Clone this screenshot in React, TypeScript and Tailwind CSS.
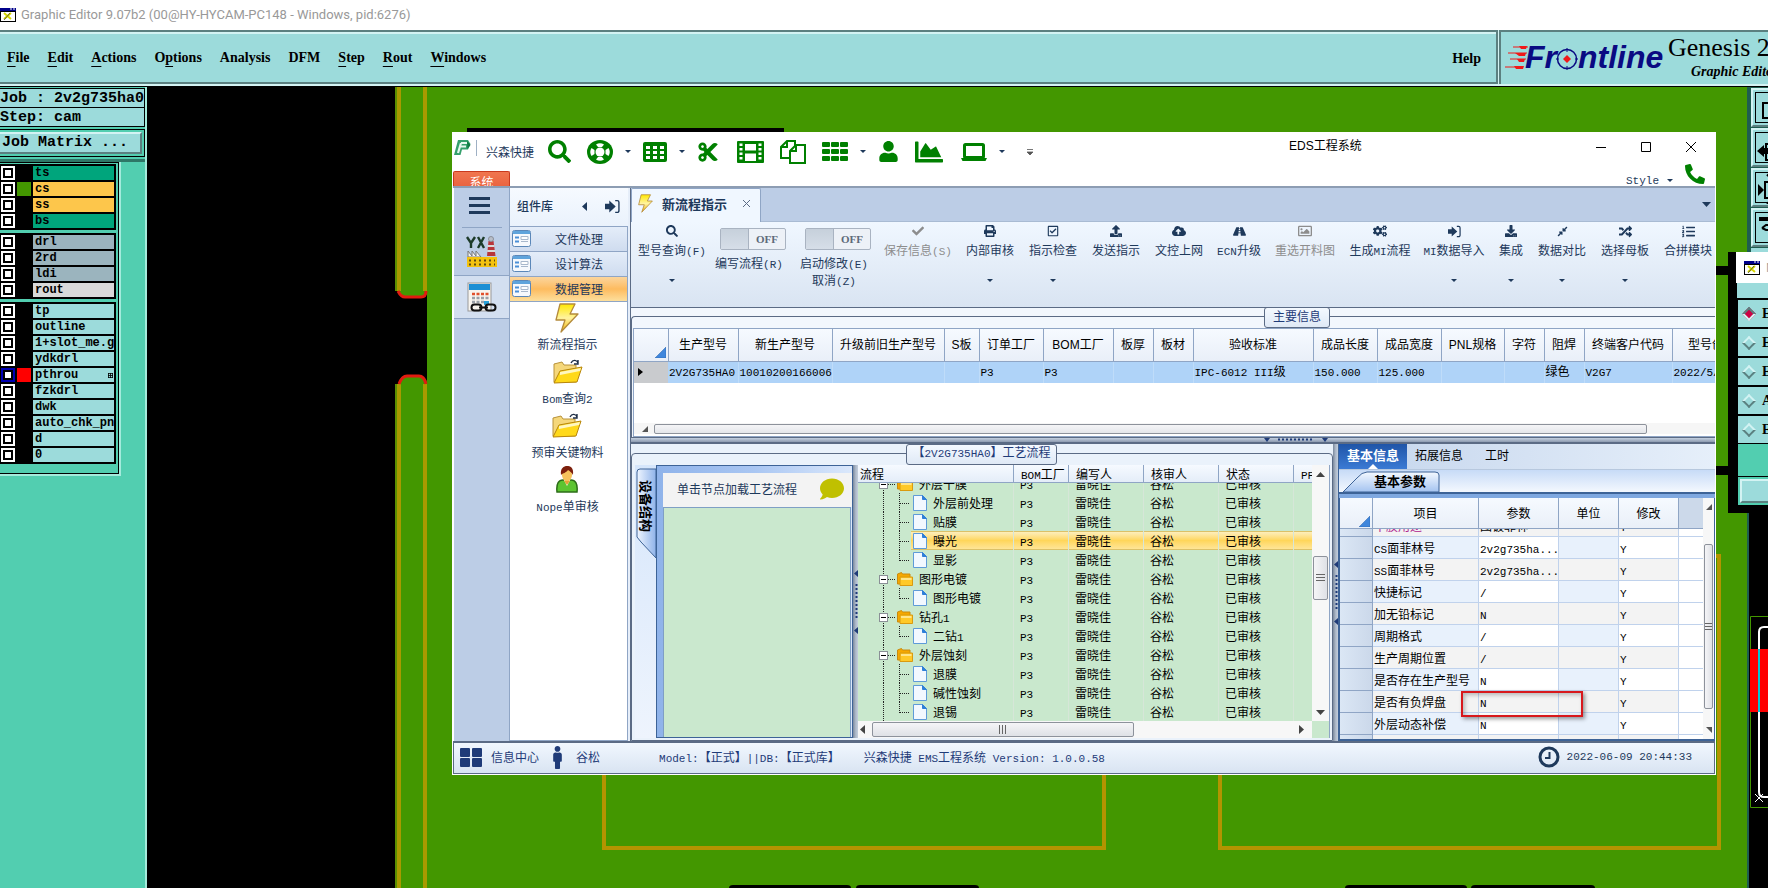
import React from 'react';
import {
  FaSearch, FaCheck, FaPrint, FaRegCheckSquare, FaUpload, FaCloudUploadAlt, FaRoad, FaRegImage, FaCogs,
  FaDownload, FaCompressAlt, FaRandom, FaListOl, FaUser, FaPhone, FaComment, FaCut, FaChartArea, FaMale
} from 'react-icons/fa';

interface Layer {
  name: string;
  bg: string;
  swatch?: string;
  active?: boolean;
}

interface RibbonItem {
  label: string;
  width: string;
  icon: React.ReactNode;
  menu?: boolean;
  disabled?: boolean;
}

interface FlowNode {
  name: string;
  folder?: boolean;
  last?: boolean;
  selected?: boolean;
}

const MENU = [
  ['', 'F', 'ile'], ['', 'E', 'dit'], ['', 'A', 'ctions'], ['O', 'p', 'tions'], ['Analysis', '', ''],
  ['DFM', '', ''], ['', 'S', 'tep'], ['', 'R', 'out'], ['', 'W', 'indows']
];

const AQUA = 'bg-[#9cdbdb]';

const LAYER_GROUPS: Layer[][] = [
  [
    { name: 'ts', bg: 'bg-[#00a57c]' },
    { name: 'cs', bg: 'bg-[#fdc64b]', swatch: 'bg-[#439700]' },
    { name: 'ss', bg: 'bg-[#fdc64b]' },
    { name: 'bs', bg: 'bg-[#00a57c]' }
  ],
  [
    { name: 'drl', bg: 'bg-[#9bb4be]' },
    { name: '2rd', bg: 'bg-[#9bb4be]' },
    { name: 'ldi', bg: 'bg-[#9bb4be]' },
    { name: 'rout', bg: 'bg-[#d9d9d9]' }
  ],
  [
    { name: 'tp', bg: AQUA },
    { name: 'outline', bg: AQUA },
    { name: '1+slot_me.gbr', bg: AQUA },
    { name: 'ydkdrl', bg: AQUA },
    { name: 'pthrou', bg: AQUA, swatch: 'bg-[#ff0000]', active: true },
    { name: 'fzkdrl', bg: AQUA },
    { name: 'dwk', bg: AQUA },
    { name: 'auto_chk_pnl', bg: AQUA },
    { name: 'd', bg: AQUA },
    { name: '0', bg: AQUA }
  ]
];

const SignIn = ({ size = 13 }: { size?: number }) => (
  <svg width={size} height={size} viewBox="0 0 14 14" fill="currentColor">
    <path d="M0 4.500h4V1.500L10 7l-6 5.500v-3H0z" />
    <path d="M9.500 1.500h2a1.500 1.500 0 0 1 1.500 1.500v8a1.500 1.500 0 0 1-1.500 1.500h-2" fill="none" stroke="currentColor" strokeWidth="1.300" />
  </svg>
);

const RIBBON: RibbonItem[] = [
  { label: '保存信息(S)', width: 'w-[72px]', icon: <FaCheck size={12} />, disabled: true },
  { label: '内部审核', width: 'w-[72px]', icon: <FaPrint size={12} />, menu: true },
  { label: '指示检查', width: 'w-[54px]', icon: <FaRegCheckSquare size={12} />, menu: true },
  { label: '发送指示', width: 'w-[72px]', icon: <FaUpload size={12} /> },
  { label: '文控上网', width: 'w-[54px]', icon: <FaCloudUploadAlt size={14} /> },
  { label: 'ECN升级', width: 'w-[66px]', icon: <FaRoad size={13} /> },
  { label: '重选开料图', width: 'w-[66px]', icon: <FaRegImage size={14} />, disabled: true },
  { label: '生成MI流程', width: 'w-[84px]', icon: <FaCogs size={14} /> },
  { label: 'MI数据导入', width: 'w-[64px]', icon: <SignIn />, menu: true },
  { label: '集成', width: 'w-[50px]', icon: <FaDownload size={12} />, menu: true },
  { label: '数据对比', width: 'w-[52px]', icon: <FaCompressAlt size={11} />, menu: true },
  { label: '选择母板', width: 'w-[74px]', icon: <FaRandom size={13} />, menu: true },
  { label: '合拼模块', width: 'w-[52px]', icon: <FaListOl size={13} /> }
];

const MAIN_COLS: [string, string, string][] = [
  ['生产型号', 'w-[70px]', '2V2G735HA0'],
  ['新生产型号', 'w-[94px]', '10010200166006'],
  ['升级前旧生产型号', 'w-[112px]', ''],
  ['S板', 'w-[35px]', ''],
  ['订单工厂', 'w-[64px]', 'P3'],
  ['BOM工厂', 'w-[70px]', 'P3'],
  ['板厚', 'w-[40px]', ''],
  ['板材', 'w-[40px]', ''],
  ['验收标准', 'w-[120px]', 'IPC-6012 III级'],
  ['成品长度', 'w-[64px]', '150.000'],
  ['成品宽度', 'w-[64px]', '125.000'],
  ['PNL规格', 'w-[63px]', ''],
  ['字符', 'w-[40px]', ''],
  ['阻焊', 'w-[40px]', '绿色'],
  ['终端客户代码', 'w-[88px]', 'V2G7'],
  ['型号创建日期', 'w-[104px]', '2022/5/']
];

const FLOW: FlowNode[] = [
  { name: '外层干膜', folder: true },
  { name: '外层前处理' },
  { name: '贴膜' },
  { name: '曝光', selected: true },
  { name: '显影', last: true },
  { name: '图形电镀', folder: true },
  { name: '图形电镀', last: true },
  { name: '钻孔1', folder: true },
  { name: '二钻1', last: true },
  { name: '外层蚀刻', folder: true },
  { name: '退膜' },
  { name: '碱性蚀刻' },
  { name: '退锡', last: true }
];

const PARAMS: [string, string][] = [
  ['干膜用途', '图镀菲林'],
  ['CS面菲林号', '2v2g735ha...'],
  ['SS面菲林号', '2v2g735ha...'],
  ['快捷标记', '/'],
  ['加无铅标记', 'N'],
  ['周期格式', '/'],
  ['生产周期位置', '/'],
  ['是否存在生产型号', 'N'],
  ['是否有负焊盘', 'N'],
  ['外层动态补偿', 'N'],
  ['', '']
];

// Latin runs are set in a narrower monospace next to the Chinese glyphs
const Mix = ({ children }: { children: string }) => (
  <>
    {children.split(/([\x20-\x7e]+)/).map((part, i) =>
      i % 2 ? <span key={i} className="font-['Liberation_Mono',monospace] text-[11px] leading-none whitespace-pre">{part}</span> : part
    )}
  </>
);

const Caret = ({ className = '' }: { className?: string }) => (
  <svg width="6" height="3" viewBox="0 0 6 3" className={`shrink-0 ${className}`}><path d="M0 0h6L3 3z" fill="currentColor" /></svg>
);

const XWindowIcon = () => (
  <svg width="16" height="14" viewBox="0 0 16 14" className="shrink-0">
    <rect width="16" height="14" fill="#000" />
    <rect x="1" y="4" width="14" height="9" fill="#fff" />
    <rect x="0" y="0" width="16" height="3" fill="#00008b" />
    <path d="M10 1h2M13 1h2" stroke="#fff" />
    <path d="M4 5l7 6M11 5l-7 6" stroke="#d8d800" strokeWidth="2" />
    <path d="M10 5l-6 7" stroke="#333" strokeWidth=".7" />
  </svg>
);

const Lightning = ({ w, h }: { w: number; h: number }) => (
  <svg width={w} height={h} viewBox="0 0 24 30">
    <defs>
      <linearGradient id="bolt" x1="0" y1="0" x2="0" y2="1">
        <stop offset="0" stopColor="#ffe800" />
        <stop offset=".5" stopColor="#fff3a0" />
        <stop offset="1" stopColor="#f0b000" />
      </linearGradient>
    </defs>
    <path d="M5 1h15l-5 10h8L6 29l4-12H1z" fill="url(#bolt)" stroke="#b48a3c" strokeWidth="1.3" strokeLinejoin="round" />
  </svg>
);

const OpenFolder = () => (
  <svg width="30" height="26" viewBox="0 0 30 26">
    <path d="M1 23V5l8-2 2 3h12v17z" fill="#f5d77a" stroke="#b8923a" />
    <path d="M1 24l6-12 22-4-5 15z" fill="#ffd91a" stroke="#b8860b" />
    <path d="M7 13l21-4-1 3-20 4z" fill="#fff7c0" />
    <path d="M18 4c2-4 6-3 7 0M25 1v4h-4" fill="none" stroke="#1c2c44" strokeWidth="1.4" />
  </svg>
);

const Person = () => (
  <svg width="22" height="28" viewBox="0 0 22 28">
    <path d="M1 26c-1-9 2-12 6-12h8c4 0 7 3 6 12z" fill="#5cc431" stroke="#2c6d18" strokeWidth="1.5" />
    <path d="M8 14l3 6 3-6z" fill="#fff" />
    <ellipse cx="11" cy="9" rx="5" ry="6.5" fill="#f6c25c" />
    <path d="M5 9C4 2 8 0 11 0s7 1 6 9c-1-2-3-4-5-5-2 3-5 3-7 5z" fill="#7c1f0c" />
    <path d="M8 15l3 4 3-4" fill="#e6a037" />
  </svg>
);

const FormIcon = () => (
  <svg width="19" height="17" viewBox="0 0 19 17">
    <rect x=".5" y=".5" width="18" height="16" rx="2" fill="#f6f9fd" stroke="#5b87b8" />
    <rect x="1" y="1" width="17" height="3" fill="#5fa4dc" />
    <path d="M3 7.5h4M3 11.5h4" stroke="#4a90d8" strokeWidth="2" />
    <path d="M9 6.5h7v3H9zM9 11.5h7" stroke="#a8b8cc" fill="#fff" />
  </svg>
);

const FactoryIcon = () => (
  <svg width="32" height="32" viewBox="0 0 32 32">
    <path d="M1 1l4 6v5M9 1L5 7M12 1l6 11M18 1l-6 11" stroke="#1d3b2a" strokeWidth="2.4" fill="none" />
    <path d="M21 20l1.500-15h5l2 15z" fill="#b8353a" />
    <path d="M21.500 10h7M21.200 15h8" stroke="#d9d9d9" strokeWidth="2" />
    <circle cx="25" cy="3" r="2.500" fill="#b9bec8" stroke="#8a8f9a" />
    <path d="M2 21v-6l4 5v-5l4 5v-5l5 6z" fill="#f4f4f4" stroke="#777" />
    <rect x="1" y="21" width="30" height="10" fill="#f4c20d" />
    <path d="M3 24.500h26M3 28.500h26" stroke="#5c4a10" strokeWidth="2" strokeDasharray="2 3" />
  </svg>
);

const CalendarIcon = () => (
  <svg width="30" height="31" viewBox="0 0 30 31">
    <rect x="1" y="1" width="23" height="28" fill="#f7f4ee" stroke="#999" />
    <rect x="2" y="2" width="21" height="6" fill="#1c8fd4" />
    <path d="M5 12h17" stroke="#e0502c" strokeWidth="2.5" strokeDasharray="3 1.500" />
    <path d="M5 16h17M5 20h13" stroke="#9aa0a8" strokeWidth="2.5" strokeDasharray="3 1.500" />
    <rect x="17" y="19" width="5" height="4" fill="#28a0d8" />
    <rect x="4.500" y="22.500" width="10" height="6" rx="3" fill="none" stroke="#111" strokeWidth="2" />
    <rect x="18.500" y="22.500" width="10" height="6" rx="3" fill="none" stroke="#111" strokeWidth="2" />
    <path d="M12 25.500h9" stroke="#111" strokeWidth="2" />
  </svg>
);

const LifeRing = () => (
  <svg width="26" height="24" viewBox="0 0 26 24">
    <ellipse cx="13" cy="12" rx="13" ry="12" fill="#008000" />
    <path d="M9 4.500q4-2.500 8 0l-2 2.500h-4zM9 19.500q4 2.500 8 0l-2-2.500h-4zM4.500 8q-2.500 4 0 8l3-2v-4zM21.500 8q2.500 4 0 8l-3-2v-4z" fill="#fff" />
    <circle cx="13" cy="12" r="4.500" fill="#fff" />
  </svg>
);

const TableIcon = () => (
  <svg width="24" height="20" viewBox="0 0 24 20">
    <rect width="24" height="20" rx="2" fill="#008000" />
    <path d="M3 4h4v3H3zM10 4h4v3h-4zM17 4h4v3h-4zM3 9h4v3H3zM10 9h4v3h-4zM17 9h4v3h-4zM3 14h4v3H3zM10 14h4v3h-4zM17 14h4v3h-4z" fill="#fff" />
  </svg>
);

const FilmIcon = () => (
  <svg width="27" height="22" viewBox="0 0 27 22">
    <rect width="27" height="22" rx="1" fill="#008000" />
    <path d="M8 3h11v6.500H8zM8 12.500h11V20H8z" fill="#fff" />
    <path d="M4 2.500v18M23 2.500v18" stroke="#fff" strokeWidth="3" strokeDasharray="2.500 2" />
  </svg>
);

const FilesIcon = () => (
  <svg width="26" height="24" viewBox="0 0 26 24" fill="#fff" stroke="#008000" strokeWidth="2">
    <path d="M7 1h8v6l-5 5v6H1V7z" />
    <path d="M7 1v6H1" fill="none" />
    <path d="M16 5h9v18H10V11z" />
    <path d="M16 5v6h-6" fill="none" />
  </svg>
);

const BarsGrid = () => (
  <svg width="26" height="20" viewBox="0 0 26 20" fill="#008000">
    {[0, 7, 14].map(y => [0, 9, 18].map(x => <rect key={`${x}-${y}`} x={x} y={y} width="8" height="5" rx="1" />))}
  </svg>
);

const LaptopIcon = () => (
  <svg width="26" height="18" viewBox="0 0 26 18">
    <rect x="3.500" y="1.500" width="19" height="13" rx="1" fill="#fff" stroke="#008000" strokeWidth="3" />
    <path d="M0 15h26l-1.500 3h-23z" fill="#008000" />
  </svg>
);

const Logo = () => (
  <svg width="17" height="16" viewBox="0 0 17 16">
    <path d="M4 0h10l2.500 4L14 9.500H8L6.500 15H0z" fill="#35a06c" />
    <path d="M7 3h6M6 6.500h6M7 3L4 13" stroke="#e6f8ee" strokeWidth="2.200" fill="none" />
    <path d="M13 1l3.500 4-3 4z" fill="#117a43" />
  </svg>
);

// ---------- Graphic Editor ----------

const MenuBar = () => (
  <div className="flex h-[57px] shrink-0 border-b border-black bg-[#d3f3f3]">
    <nav className="mr-px mb-[2px] flex min-w-0 flex-1 items-center gap-[18px] border-y-2 border-r-2 border-t-[#5b8080] border-r-[#5b8080] border-b-[#5b8080] bg-[#9cdbdb] pt-[2px] pl-[7px] font-['Liberation_Serif',serif] text-[14px] font-bold shadow-[inset_0_2px_0_#d3f3f3]">
      {MENU.map(([a, b, c]) => (
        <button key={a + b + c} className="leading-5">{a}<span className="underline underline-offset-4">{b}</span>{c}</button>
      ))}
      <button className="mr-[15px] ml-auto">Help</button>
    </nav>
    <div className="mb-[2px] flex w-[269px] shrink-0 overflow-hidden border-t-2 border-l-2 border-[#5b8080] bg-[#9cdbdb] pl-1">
      <svg width="160" height="50" viewBox="0 0 160 50" className="shrink-0">
        <path d="M8 15h15M3 21h19M5 27h16M0 35h18" stroke="#f01818" />
        <path d="M14 14h8l-1 3h-5zM10 21h11l-1 3h-6zM12 27h8l-1 3h-5zM9 34h10l-1 3h-7z" fill="#f01818" />
        <g fill="#0a0a82" fontFamily="Liberation Sans" fontWeight="bold" fontStyle="italic" fontSize="32">
          <text x="20" y="36">Fr</text>
          <text x="73" y="36">ntline</text>
        </g>
        <circle cx="62" cy="27" r="9.500" fill="none" stroke="#0a0a82" strokeWidth="1.500" />
        <path d="M62 16v4M62 34v4M51 27h3M70 27h3" stroke="#0a0a82" />
        <path d="M62 23l4 4-4 4-4-4z" fill="#f01818" />
      </svg>
      <div className="flex flex-col font-['Liberation_Serif',serif] whitespace-nowrap">
        <span className="pl-[3px] text-[26px] leading-8">Genesis 2000</span>
        <span className="pl-[26px] text-[14px] leading-4 font-bold italic">Graphic Editor</span>
      </div>
    </div>
  </div>
);

const LayerRow = ({ layer }: { layer: Layer }) => (
  <label className="flex h-4 items-center gap-[2px] bg-black">
    <input
      type="checkbox"
      aria-label={layer.name}
      className={`ml-px h-[14px] w-[14px] shrink-0 appearance-none border-2 bg-white shadow-[inset_0_0_0_2px_#000] ${layer.active ? 'border-[#0000b4]' : 'border-white'}`}
    />
    <span className={`h-[14px] w-[14px] shrink-0 ${layer.swatch ?? 'bg-black'}`} />
    <span className={`flex h-[14px] w-[81px] items-center overflow-hidden pl-[2px] text-[12px] leading-[14px] ${layer.bg}`}>
      {layer.name}
      {layer.active && (
        <svg width="5" height="5" viewBox="0 0 5 5" className="mr-px ml-auto"><path d="M0 .5h5M0 2.500h5M0 4.500h5M.5 0v5M2.500 0v5M4.500 0v5" stroke="#000" strokeWidth=".8" /></svg>
      )}
    </span>
  </label>
);

const LayerSidebar = () => (
  <aside className="w-[147px] shrink-0 border-r-2 border-[#a4ebdc] bg-[#52ceb0] pt-px font-['Liberation_Mono',monospace] font-bold">
    <div className="border border-l-0 border-black bg-black text-[15px] leading-5">
      <div className="mb-px h-[18px] overflow-hidden bg-[#9cdbdb] whitespace-pre">Job : 2v2g735ha0</div>
      <div className="h-[18px] overflow-hidden bg-[#9cdbdb] whitespace-pre">Step: cam</div>
    </div>
    <div className="mt-[2px] border border-l-0 border-black py-[2px] pr-[2px]">
      <button className="block h-[22px] w-full border-2 border-l-0 border-t-[#d3f3f3] border-r-[#5b8080] border-b-[#5b8080] bg-[#9cdbdb] pl-[2px] text-left text-[15px] leading-[18px]">Job Matrix ...</button>
    </div>
    <div className="mt-[2px] h-[3px] bg-[#2e7767]" />
    <div className="w-[121px] border-r-2 border-b-2 border-[#a4ebdc]">
      <div className="flex flex-col gap-[3px] border-t border-r border-b border-black pt-px pr-[2px] pb-[9px]">
        {LAYER_GROUPS.map((group, i) => (
          <div key={i} className="border-y border-r border-black">
            {group.map(layer => <LayerRow key={layer.name} layer={layer} />)}
          </div>
        ))}
      </div>
    </div>
  </aside>
);

const Board = () => (
  <svg className="absolute top-0 left-0" width="1621" height="801" viewBox="147 87 1621 801">
    <rect x="395" y="87" width="1353" height="801" fill="#439700" />
    <path d="M396 87V291M396 384V888" stroke="#5a8f00" strokeWidth="2" />
    <path d="M399 87V291M425 87V291M399 384V888M425 384V888" stroke="#a89a00" strokeWidth="4" />
    <path d="M395 291h4q0 7 8 7h12q8 0 8-7V384q0-9-12-9h-6q-10 0-10 9h-4z" fill="#000" />
    <path d="M398 291q3 6 7 6h16q5 0 5-6M399 384q3-8 8-8h12q5 0 7 8" fill="none" stroke="#e21b10" strokeWidth="3" />
    <rect x="467" y="128" width="317" height="10" fill="#000" />
    <path d="M604 770V848H1104V770M1220 770V848H1719V556h-6" fill="none" stroke="#b39400" strokeWidth="4" />
    <path d="M729 888q0-3 4-3h114q4 0 4 3zM856 888q0-3 4-3h115q4 0 4 3zM1345 888q0-3 4-3h114q4 0 4 3zM1471 888q0-3 4-3h116q4 0 4 3z" fill="#000" />
    <path d="M1700 266h40v9h-40zM1700 466h40v9h-40z" fill="#000" />
    <rect x="1748" y="370" width="20" height="518" fill="#000" />
    <path d="M1748 87V888" stroke="#1f5d50" strokeWidth="2" />
    <path d="M1768 616.500h-17.500v191H1768" fill="none" stroke="#439700" />
    <rect x="1750" y="649" width="18" height="63" fill="#ff0000" />
    <path d="M1768 627h-4q-5 0-5 5V792q0 5 5 5h4" fill="none" stroke="#fff" strokeWidth="2" />
    <path d="M1759 649V712" stroke="#00c8d8" strokeWidth="2" />
    <path d="M1755 794l8 8M1763 794l-8 8" stroke="#fff" />
  </svg>
);

const TOOL_DRAWINGS = [
  'M20 5v6M15 9h10M9 12h14v15H9z',
  'M12 13h14v5h5v6h-5v5H12z',
  'M11 11h14v16H11zM13 5l3-3M13 33l3-3',
  'M7 8h18M8 17l4-3h12M8 17l4 2h12M17 24a5 5 0 1 0 8-1'
];

const TOOL_FILLS = [
  'M18 7l4-3v6z',
  'M3 20l7-6v3h5v6h-5v3z',
  'M4 13l6 6-6 6z',
  'M5 6h20v4H5z'
];

const ToolStrip = () => (
  <div className="relative w-5 shrink-0 self-start overflow-hidden bg-[#1f5d50] pt-px pl-[3px]">
    {TOOL_DRAWINGS.map((d, i) => (
      <button key={i} aria-label={`tool ${i + 1}`} className="mb-px block h-[39px] w-[39px] border-2 border-t-[#d3f3f3] border-r-[#5b8080] border-b-[#5b8080] border-l-[#d3f3f3] bg-[#9cdbdb] p-px">
        <svg width="33" height="33" viewBox="0 0 33 33" fill="none" stroke="#000" strokeWidth="2">
          <rect x="1.500" y="1.500" width="30" height="30" strokeWidth="1" />
          <path d={d} />
          <path d={TOOL_FILLS[i]} fill="#000" stroke="none" />
        </svg>
      </button>
    ))}
    <div className="h-2 bg-[#9cdbdb]" />
  </div>
);

const OptionsPopup = () => (
  <div className="absolute top-[252px] right-0 h-[261px] w-10 overflow-hidden border-l-8 border-black bg-black">
    <div className="flex h-[31px] items-center bg-white pl-2">
      <XWindowIcon />
      <span className="ml-[6px] text-[12px] text-[#999]">N</span>
    </div>
    <div className="ml-px h-[15px] bg-[#9cdbdb]" />
    {['E', 'E', 'E', 'A', 'E'].map((t, i) => (
      <label key={i} className="mt-[2px] ml-[2px] flex h-[27px] items-center gap-2 bg-[#9cdbdb] pl-[6px] font-['Liberation_Serif',serif] text-[14px] font-bold">
        <input
          type="radio"
          name="popup-option"
          defaultChecked={i === 0}
          className="h-[10px] w-[10px] shrink-0 rotate-45 appearance-none border-2 border-t-[#d3f3f3] border-r-[#5b8080] border-b-[#5b8080] border-l-[#d3f3f3] checked:border-t-[#5b8080] checked:border-r-[#d3f3f3] checked:border-b-[#d3f3f3] checked:border-l-[#5b8080] checked:bg-[#cc0044]"
        />
        {t}
      </label>
    ))}
    <div className="mt-px ml-[2px] h-8 bg-[#52ceb0]" />
    <div className="mt-px ml-[2px] bg-[#52ceb0] p-[2px]">
      <button aria-label="apply" className="block h-6 w-16 border-2 border-t-[#d3f3f3] border-r-[#5b8080] border-b-[#5b8080] border-l-[#d3f3f3] bg-[#9cdbdb]" />
    </div>
  </div>
);

// ---------- EDS window ----------

const EdsHeader = () => (
  <header className="flex h-[55px] shrink-0 border-b-2 border-[#8d9db3] bg-white">
    <div className="flex w-[836px] shrink-0 flex-col">
      <div className="flex h-[37px] shrink-0 items-center text-[#008000]">
        <span className="-mt-2 ml-px"><Logo /></span>
        <span className="-mt-2 ml-[5px] h-4 border-l border-[#9fb0c4]" />
        <span className="mr-[14px] ml-[9px] text-[12px] text-[#1e395b]">兴森快捷</span>
        <div className="flex items-center gap-4">
          <button aria-label="search"><FaSearch size={23} /></button>
          <button aria-label="help"><LifeRing /></button>
          <Caret className="-mx-1 text-[#1e395b]" />
          <button aria-label="table"><TableIcon /></button>
          <Caret className="-mx-1 text-[#1e395b]" />
          <button aria-label="cut"><FaCut size={22} /></button>
          <button aria-label="film" className="pl-[2px]"><FilmIcon /></button>
          <button aria-label="copy"><FilesIcon /></button>
          <button aria-label="grid"><BarsGrid /></button>
          <Caret className="-mx-1 text-[#1e395b]" />
          <button aria-label="user"><FaUser size={21} /></button>
          <button aria-label="chart"><FaChartArea size={28} /></button>
          <button aria-label="laptop" className="pl-[2px]"><LaptopIcon /></button>
          <Caret className="-mx-1 text-[#1e395b]" />
          <svg width="6" height="6" viewBox="0 0 6 6" className="ml-[10px]"><path d="M0 .5h6M0 3h6L3 6z" fill="#555" stroke="#555" strokeWidth=".8" /></svg>
        </div>
      </div>
      <button className="mt-px h-[15px] w-[57px] overflow-hidden rounded-t-[2px] border border-b-0 border-[#c93a1e] bg-gradient-to-b from-[#f0764f] to-[#ea6440] pt-px text-[12px] leading-[18px] text-white">系统</button>
    </div>
    <h1 className="pt-[5px] font-['Liberation_Sans','Noto_Sans_CJK_SC',sans-serif] text-[12px] leading-4 whitespace-nowrap">EDS工程系统</h1>
    <div className="ml-auto flex flex-col items-end">
      <div className="mr-[2px] flex h-[28px]">
        <button aria-label="minimize" className="flex w-[45px] items-center justify-center"><svg width="10" height="10" stroke="#000"><path d="M0 5.500h10" /></svg></button>
        <button aria-label="maximize" className="flex w-[45px] items-center justify-center"><svg width="10" height="10" fill="none" stroke="#000"><path d="M.5.5h9v9h-9z" /></svg></button>
        <button aria-label="close" className="flex w-[45px] items-center justify-center"><svg width="10" height="10" stroke="#000"><path d="M0 0l10 10M10 0L0 10" /></svg></button>
      </div>
      <div className="flex h-[25px] items-end overflow-hidden pr-[10px] text-[#1e395b]">
        <span className="font-['Liberation_Mono',monospace] text-[11px] leading-[10px]">Style</span>
        <Caret className="mb-1 ml-2" />
        <FaPhone size={20} className="mb-[2px] ml-3 -scale-x-100 text-[#008000]" />
      </div>
    </div>
  </header>
);

const Rail = () => (
  <div className="w-14 shrink-0 border-l border-white bg-[#bccde6]">
    <button aria-label="menu" className="mx-auto flex h-[40px] w-10 items-center justify-center border-b border-[#8fa5c5] pr-1 pb-1">
      <svg width="21" height="17" viewBox="0 0 21 17"><path d="M0 1.500h21M0 8.500h21M0 15.500h21" stroke="#1e395b" strokeWidth="3" /></svg>
    </button>
    <button aria-label="factory" className="flex h-[47px] w-full items-center justify-center"><FactoryIcon /></button>
    <button aria-label="calendar" className="flex h-[44px] w-full items-center justify-center border-y border-[#8fa5c5] bg-[#d3dff0]"><CalendarIcon /></button>
  </div>
);

const PANEL_BUTTONS = ['文件处理', '设计算法', '数据管理'];

const ComponentPanel = () => (
  <div className="flex w-[121px] shrink-0 flex-col border-l border-[#8fa5c5] bg-[#e6eef9] pr-[2px] text-[#1e395b]">
    <div className="flex h-[38px] shrink-0 items-center bg-gradient-to-b from-[#f6faff] to-[#eaf2fc] pb-[2px] pl-[7px]">
      <span className="text-[12px] font-medium">组件库</span>
      <svg width="5" height="9" viewBox="0 0 5 9" className="ml-[29px]"><path d="M5 0v9L0 4.500z" fill="#1e395b" /></svg>
      <span className="ml-[18px]"><SignIn size={15} /></span>
    </div>
    <div className="flex flex-1 flex-col border border-l-0 border-[#8fa5c5] bg-white">
      {PANEL_BUTTONS.map((label, i) => (
        <button
          key={label}
          className={`flex h-[25px] items-center border-b border-[#8fa5c5] pb-px pl-[2px] text-[12px] ${i === 2 ? 'bg-gradient-to-b from-[#fbd59c] via-[#fdbb5e] to-[#fddf9c]' : 'bg-gradient-to-b from-[#e4edf9] to-[#cfdcef]'}`}
        >
          <FormIcon />
          <span className="ml-6">{label}</span>
        </button>
      ))}
      <div className="flex flex-col items-center pr-[2px] text-[12px] leading-5">
        {[
          ['新流程指示', <Lightning w={24} h={30} />],
          ['Bom查询2', <OpenFolder />],
          ['预审关键物料', <OpenFolder />],
          ['Nope单审核', <Person />]
        ].map(([label, icon]) => (
          <button key={label as string} className="flex h-[54px] flex-col items-center">
            <span className="flex h-8 items-center">{icon}</span>
            <span><Mix>{label as string}</Mix></span>
          </button>
        ))}
      </div>
    </div>
  </div>
);

const Toggle = ({ lines, width }: { lines: string[]; width: string }) => (
  <label className={`flex shrink-0 flex-col items-center pt-[6px] ${width}`}>
    <span className="relative mb-1 ml-2 flex h-[22px] w-[66px] rounded-[2px] border border-[#a9b3c1] bg-[#edf1f7]">
      <input type="checkbox" role="switch" className="h-full w-7 appearance-none border-r border-[#a9b3c1] bg-gradient-to-b from-[#c6d0db] to-[#d6dee8]" />
      <span className="flex flex-1 items-center justify-center font-['Liberation_Serif',serif] text-[11px] font-bold text-[#5d6a7a]">OFF</span>
    </span>
    {lines.map(l => <span key={l} className="h-[17px] leading-[17px] whitespace-nowrap"><Mix>{l}</Mix></span>)}
  </label>
);

const RibbonButton = ({ item }: { item: RibbonItem }) => (
  <button className={`flex shrink-0 flex-col items-center ${item.width} ${item.disabled ? 'text-[#8d8d8d]' : ''}`}>
    <span className="flex h-[18px] items-center">{item.icon}</span>
    <span className="h-5 leading-5 whitespace-nowrap"><Mix>{item.label}</Mix></span>
    {item.menu && <Caret className="mt-[19px]" />}
  </button>
);

const Ribbon = () => (
  <div className="flex h-[86px] shrink-0 overflow-hidden border-b border-[#5b6b85] bg-gradient-to-b from-[#f0f7ff] to-[#d9e4f2] pl-px text-[12px] text-[#1e395b]">
    <RibbonButton item={{ label: '型号查询(F)', width: 'w-[80px]', icon: <FaSearch size={12} />, menu: true }} />
    <Toggle width="w-[74px]" lines={['编写流程(R)']} />
    <Toggle width="w-[96px]" lines={['启动修改(E)', '取消(Z)']} />
    {RIBBON.map(item => <RibbonButton key={item.label} item={item} />)}
  </div>
);

const Corner = () => (
  <svg width="11" height="11" viewBox="0 0 11 11" className="mt-4 mr-[2px] ml-auto"><path d="M11 0v11H0z" fill="#3f86dc" stroke="#2a62a8" strokeWidth=".5" /></svg>
);

const MainInfo = () => (
  <section className="relative shrink-0 bg-[#f2f7fd] pt-2">
    <h2 className="absolute -top-px left-[633px] h-[21px] rounded-[3px] border border-[#5b6b85] bg-gradient-to-b from-[#f4f9ff] to-[#dfe9f6] px-2 text-[12px] leading-[15px] text-[#1f3b78]">主要信息</h2>
    <div className="rounded-tl-[4px] border-t border-l border-[#5b6b85] pt-[11px] pl-px">
      <div className="h-[109px] overflow-hidden border-t border-b border-l border-[#8fa5c5] bg-white">
        <table className="w-[1142px] table-fixed border-collapse text-[12px]">
          <thead>
            <tr className="h-8 bg-gradient-to-b from-[#f6faff] to-[#e9eff8] whitespace-nowrap">
              <th className="w-[34px] border-r border-b border-[#8fa5c5] p-0"><Corner /></th>
              {MAIN_COLS.map(([h, w]) => (
                <th key={h} className={`overflow-hidden border-r border-b border-[#8fa5c5] p-0 font-['Liberation_Sans','Noto_Sans_CJK_SC',sans-serif] font-normal ${w}`}>{h}</th>
              ))}
            </tr>
          </thead>
          <tbody>
            <tr className="h-[22px] bg-[#afd3f8] whitespace-nowrap">
              <td className="bg-[#c9cbce] p-0"><svg width="5" height="8" viewBox="0 0 5 8" className="ml-1"><path d="M0 0v8l5-4z" /></svg></td>
              {MAIN_COLS.map(([h, , v]) => (
                <td key={h} className="overflow-hidden border-r border-[#bfdcf9] pt-0 pr-0 pb-[2px] pl-px leading-4"><Mix>{v}</Mix></td>
              ))}
            </tr>
          </tbody>
        </table>
        <div className="mt-[40px] flex h-[11px] items-center bg-[#f6f6f6] pl-2">
          <svg width="6" height="6" viewBox="0 0 6 6"><path d="M6 0v6H0z" fill="#555" /></svg>
          <div className="ml-[6px] h-[10px] flex-1 rounded-[2px] border border-[#8d929b] bg-gradient-to-b from-[#f5f5f7] to-[#e4e6ea]" />
          <div className="w-[68px]" />
        </div>
      </div>
    </div>
  </section>
);

// Dotted connectors in front of a tree node
const TreeLines = ({ node }: { node: FlowNode }) => (
  <svg width={node.folder ? 37 : 53} height="19" className="shrink-0" fill="none" stroke="#222" strokeDasharray="1 1">
    <path d="M25.500 0v19" />
    {node.folder ? (
      <>
        <path d="M30 10.500h7" />
        <rect x="21.500" y="6.500" width="8" height="8" fill="#fff" stroke="#8a8f96" strokeDasharray="none" />
        <path d="M23 10.500h5" stroke="#000" strokeDasharray="none" />
      </>
    ) : (
      <>
        <path d={node.last ? 'M41.500 0v11' : 'M41.500 0v19'} />
        <path d="M42 10.500h10" />
      </>
    )}
  </svg>
);

const FolderIcon = () => (
  <svg width="16" height="14" viewBox="0 0 16 14" className="shrink-0">
    <path d="M.5 12V2l4-1.500 1 1.500H13v10z" fill="#f5a800" stroke="#c98a10" />
    <path d="M3 5h12.500v8.500H3z" fill="#ffc928" stroke="#d99a10" />
    <path d="M4 6h10.500v2H4z" fill="#ffe58a" />
  </svg>
);

const FileIcon = () => (
  <svg width="14" height="16" viewBox="0 0 14 16" className="shrink-0">
    <path d="M.5.5h9l4 4v11H.5z" fill="#f2f8ff" stroke="#5e9bd8" />
    <path d="M9.500.5l4 4h-4z" fill="#2f7fd8" stroke="#2f7fd8" />
  </svg>
);

const Cols = ({ widths }: { widths: string[] }) => (
  <colgroup>{widths.map((w, i) => <col key={i} className={w} />)}</colgroup>
);

const FLOW_WIDTHS = ['w-[155px]', 'w-[55px]', 'w-[75px]', 'w-[75px]', 'w-[75px]', 'w-[19px]'];

const FlowTree = () => (
  <div className="flex min-w-0 flex-1 flex-col border-r border-[#8fa5c5] bg-[#c9e8cd]">
    <div className="flex min-h-0 flex-1">
      <div className="flex w-[454px] shrink-0 flex-col overflow-hidden">
        <table className="w-[454px] shrink-0 table-fixed border-separate border-spacing-0 text-[12px]">
          <Cols widths={FLOW_WIDTHS} />
          <thead>
            <tr className="bg-gradient-to-b from-[#f6faff] to-[#e3ecf8] text-left whitespace-nowrap">
              {['流程', 'BOM工厂', '编写人', '核审人', '状态', 'PF'].map((h, i) => (
                <th key={h} className={`h-[18px] overflow-hidden border-b border-[#8fa5c5] p-0 leading-4 font-normal ${i ? 'border-l pl-[7px]' : 'pl-[2px]'}`}><Mix>{h}</Mix></th>
              ))}
            </tr>
          </thead>
        </table>
        <div className="min-h-0 flex-1 overflow-hidden">
          <table className="-mt-[9px] w-[454px] table-fixed border-separate border-spacing-0 text-[12px] whitespace-nowrap">
            <Cols widths={FLOW_WIDTHS} />
            <tbody>
              {FLOW.map((node, i) => {
                const fill = node.selected ? 'bg-gradient-to-b from-[#fdf1c4] via-[#ffd65a] to-[#ffe79c] shadow-[inset_0_1px_0_#dcc168,inset_0_-1px_0_#dcc168]' : '';
                return (
                  <tr key={i}>
                    <td className="h-[19px] p-0">
                      <div className="flex h-[19px]">
                        <TreeLines node={node} />
                        <div className={`flex flex-1 items-center pl-[2px] ${fill}`}>
                          {node.folder ? <FolderIcon /> : <FileIcon />}
                          <span className="ml-[6px] leading-4"><Mix>{node.name}</Mix></span>
                        </div>
                      </div>
                    </td>
                    {['P3', '雷晓佳', '谷松', '已审核', ''].map((v, k) => (
                      <td key={k} className={`h-[19px] border-l border-l-[#d6e6d8] py-0 pr-0 pl-[6px] leading-4 ${fill}`}><Mix>{v}</Mix></td>
                    ))}
                  </tr>
                );
              })}
            </tbody>
          </table>
        </div>
      </div>
      <div className="flex flex-1 flex-col items-center bg-[#f7f7f7] pt-[7px] pb-[6px]">
        <svg width="9" height="5" viewBox="0 0 9 5"><path d="M0 5h9L4.500 0z" fill="#444" /></svg>
        <div className="mt-[79px] flex h-[44px] w-[15px] items-center justify-center rounded-[2px] border border-[#8d929b] bg-gradient-to-r from-[#f5f5f7] to-[#dfe1e6]">
          <svg width="9" height="8" stroke="#666"><path d="M0 .5h9M0 3.500h9M0 6.500h9" /></svg>
        </div>
        <svg width="9" height="5" viewBox="0 0 9 5" className="mt-auto"><path d="M0 0h9L4.500 5z" fill="#444" /></svg>
      </div>
    </div>
    <div className="flex h-[17px] w-[454px] items-center bg-[#f7f7f7] pl-[2px]">
      <svg width="5" height="9" viewBox="0 0 5 9"><path d="M5 0v9L0 4.500z" fill="#444" /></svg>
      <div className="ml-[7px] flex h-[15px] w-[262px] items-center justify-center rounded-[2px] border border-[#8d929b] bg-gradient-to-b from-[#f5f5f7] to-[#dfe1e6]">
        <svg width="8" height="9" stroke="#666"><path d="M.5 0v9M3.500 0v9M6.500 0v9" /></svg>
      </div>
      <svg width="5" height="9" viewBox="0 0 5 9" className="mr-2 ml-auto"><path d="M0 0v9l5-4.500z" fill="#444" /></svg>
    </div>
  </div>
);

const Splitter = () => (
  <div className="flex w-[5px] shrink-0 flex-col items-center justify-center bg-gradient-to-r from-[#7b8a9e] via-[#aab6c6] to-[#c4cfdd]">
    <svg width="4" height="64" viewBox="0 0 4 64"><path d="M4 0v7L0 3.500zM4 57v7l-4-3.500z" fill="#1f3b78" /><path d="M2.500 14V50" stroke="#1f3b78" strokeWidth="2" strokeDasharray="2 2" /></svg>
  </div>
);

const FlowPanel = () => (
  <section className="relative flex min-w-0 flex-1 flex-col bg-[#eaf2fb] pt-[9px]">
    <h2 className="absolute top-0 left-[275px] h-[21px] w-[151px] rounded-[3px] border border-[#5b6b85] bg-gradient-to-b from-[#f4f9ff] to-[#dfe9f6] text-center text-[12px] leading-[14px] whitespace-nowrap text-[#1f3b78]"><Mix>【2V2G735HA0】工艺流程</Mix></h2>
    <div className="flex min-h-0 flex-1 rounded-t-[4px] border border-[#5b6b85] pt-[11px] pr-[2px] pb-[2px] pl-[3px]">
      <div className="relative flex w-[21px] shrink-0 justify-center bg-gradient-to-b from-[#d6e6fb] to-[#eef4fd]">
        <svg width="21" height="94" viewBox="0 0 21 94" className="absolute top-0 left-0">
          <defs>
            <linearGradient id="sidetab"><stop offset="0" stopColor="#eef5ff" /><stop offset="1" stopColor="#8fb3ea" /></linearGradient>
          </defs>
          <path d="M21 4H5Q2 4 2 7v65l4 5 15 16z" fill="url(#sidetab)" stroke="#3d6397" />
        </svg>
        <button className="relative mt-[14px] h-[54px] text-[13px] leading-4 font-bold [text-orientation:sideways] [writing-mode:vertical-rl]">设备结构</button>
      </div>
      <div className="flex w-[197px] shrink-0 flex-col border border-[#3d6397] bg-gradient-to-r from-[#8fb3ea] via-[#a9c6f2] to-[#dbe8fb] pt-[7px] pl-[6px]">
        <div className="flex h-[34px] shrink-0 items-center justify-between bg-[#f3f3f3] pr-[8px] pb-[2px] pl-[14px] text-[12px] text-[#1e395b]">
          单击节点加载工艺流程
          <FaComment size={24} className="text-[#c0c000]" />
        </div>
        <div className="mr-px flex-1 border border-b-0 border-[#7f9fc5] bg-[#cae8ce]" />
      </div>
      <Splitter />
      <FlowTree />
    </div>
  </section>
);

const PARAM_WIDTHS = ['w-[33px]', 'w-[106px]', 'w-[80px]', 'w-[60px]', 'w-[60px]', 'w-[24px]'];

const ParamPanel = () => (
  <section className="relative flex w-[377px] shrink-0 flex-col border-l border-[#3d6397] text-[12px]">
    <div className="flex h-[26px] shrink-0 items-start border-b border-[#b7c8de] bg-gradient-to-r from-[#c4d5ec] to-[#e6effa] leading-[22px]">
      <button className="relative h-full w-[68px] bg-gradient-to-b from-[#1f55a8] to-[#3b7ad4] pb-[3px] text-[13px] leading-[22px] font-bold text-white">
        基本信息
        <svg width="10" height="5" viewBox="0 0 10 5" className="absolute bottom-0 left-[29px]"><path d="M0 5h10L5 0z" fill="#fff" /></svg>
      </button>
      <button className="ml-[8px]">拓展信息</button>
      <button className="ml-[22px]">工时</button>
    </div>
    <div className="relative h-[22px] shrink-0 bg-gradient-to-b from-[#c7dbf7] to-[#f4f8fe]">
      <svg width="105" height="22" viewBox="0 0 105 22" className="absolute top-0 left-0">
        <defs>
          <linearGradient id="subtab" x1="0" y1="0" x2="0" y2="1"><stop offset="0" stopColor="#f4f9ff" /><stop offset="1" stopColor="#a4c3f0" /></linearGradient>
        </defs>
        <path d="M4 22l14-14q5-6 10-6h68q4 0 4 3v17z" fill="url(#subtab)" stroke="#3d6397" />
      </svg>
      <button className="relative ml-[35px] text-[13px] leading-[22px] font-bold">基本参数</button>
    </div>
    <div className="h-[6px] shrink-0 border-t-2 border-[#3d6397] bg-[#7fa8e0]" />
    <div className="flex min-h-0 flex-1 border-x border-b-2 border-[#3d6397]">
      <div className="flex w-[363px] flex-col overflow-hidden">
        <table className="w-[363px] shrink-0 table-fixed border-separate border-spacing-0">
          <Cols widths={PARAM_WIDTHS} />
          <thead>
            <tr className="bg-gradient-to-b from-[#f6faff] to-[#e9eff8]">
              <th className="h-[31px] border-r border-b border-[#8fa5c5] p-0"><Corner /></th>
              {['项目', '参数', '单位', '修改'].map(h => <th key={h} className="h-[31px] border-r border-b border-[#8fa5c5] p-0 font-normal">{h}</th>)}
              <th className="border-b border-[#8fa5c5] bg-[#ccd9ea] p-0" />
            </tr>
          </thead>
        </table>
        <div className="min-h-0 flex-1 overflow-hidden bg-white">
          <table className="-mt-[14px] w-[363px] table-fixed border-separate border-spacing-0 whitespace-nowrap">
            <Cols widths={PARAM_WIDTHS} />
            <tbody>
              {PARAMS.map(([name, value], i) => {
                const odd = i % 2 === 1;
                const cell = 'h-[22px] overflow-hidden border-r border-b border-[#c0d2ec] py-0 pr-0 pl-px leading-4';
                return (
                  <tr key={i} className={odd ? 'bg-white' : 'bg-[#f3f3f3]'}>
                    <td className="h-[22px] border-r border-b border-[#8fa5c5] bg-gradient-to-r from-[#dbe7f5] to-[#cbd8ea] p-0" />
                    <td className={`${cell} ${odd ? 'bg-[#e8f1fc]' : ''} ${i === 0 ? 'text-[#b0208c]' : ''}`}><Mix>{name}</Mix></td>
                    <td className={cell}><Mix>{value}</Mix></td>
                    <td className={`${cell} ${odd ? 'bg-[#e8f1fc]' : ''}`} />
                    <td className={cell}>{name && <Mix>Y</Mix>}</td>
                    <td className="border-b border-[#c0d2ec] bg-white p-0" />
                  </tr>
                );
              })}
            </tbody>
          </table>
        </div>
      </div>
      <div className="flex flex-1 flex-col items-center bg-[#f7f7f7] py-[6px]">
        <svg width="6" height="6" viewBox="0 0 6 6"><path d="M6 0v6H0z" fill="#555" /></svg>
        <div className="mt-[34px] flex h-[165px] w-[9px] items-center justify-center rounded-[2px] border border-[#8d929b] bg-gradient-to-r from-[#f5f5f7] to-[#dfe1e6]">
          <svg width="7" height="8" stroke="#666"><path d="M0 .5h7M0 3.500h7M0 6.500h7" /></svg>
        </div>
        <svg width="6" height="6" viewBox="0 0 6 6" className="mt-auto"><path d="M6 0v6L0 0z" fill="#555" /></svg>
      </div>
    </div>
    {/* Highlight mark over the 是否有负焊盘 row */}
    <div className="absolute top-[247px] left-[122px] h-[26px] w-[122px] border-2 border-[#d8181c] shadow-[2px_2px_4px_rgba(0,0,0,0.4),inset_2px_2px_4px_rgba(0,0,0,0.25)]" />
  </section>
);

const StatusBar = () => (
  <footer className="flex h-[33px] shrink-0 items-center border border-t-2 border-[#5b6b85] bg-gradient-to-b from-[#f1f7fe] to-[#d9e4f2] pb-[2px] pl-[6px] text-[12px] whitespace-nowrap text-[#1f3b78]">
    <svg width="22" height="19" viewBox="0 0 22 19" fill="#1f3b78"><rect width="10" height="9" rx="1" /><rect x="12" width="10" height="9" rx="1" /><rect y="10" width="10" height="9" rx="1" /><rect x="12" y="10" width="10" height="9" rx="1" /></svg>
    <span className="ml-[9px]">信息中心</span>
    <FaMale size={23} className="mx-[7px]" />
    <span>谷松</span>
    <span className="ml-[59px]"><Mix>Model:【正式】||DB:【正式库】</Mix></span>
    <span className="ml-6"><Mix>兴森快捷 EMS工程系统 Version: 1.0.0.58</Mix></span>
    <span className="mr-[22px] ml-auto flex items-center gap-[7px] text-[#1e395b]">
      <svg width="22" height="22" viewBox="0 0 22 22" fill="none" stroke="#1e395b"><circle cx="11" cy="11" r="9" strokeWidth="3" /><path d="M11.500 6v6H7" strokeWidth="2" /></svg>
      <Mix>2022-06-09 20:44:33</Mix>
    </span>
  </footer>
);

const EdsWindow = () => (
  <div className="absolute top-[132px] right-[52px] left-[452px] flex h-[643px] flex-col overflow-hidden border border-white bg-white font-['Noto_Sans_CJK_SC',sans-serif]">
    <EdsHeader />
    <div className="flex min-h-0 flex-1">
      <Rail />
      <ComponentPanel />
      <main className="flex min-w-0 flex-1 flex-col border-l border-[#5b6b85]">
        <div className="flex h-[34px] shrink-0 items-center justify-between border-b border-[#a9bbd3] bg-[#bccde6] pr-1">
          <div className="flex h-[34px] w-[130px] items-center rounded-t-[2px] border-x border-t border-[#8fa5c5] bg-[#f0f7ff] pb-[3px] pl-[6px] text-[#1e395b]">
            <Lightning w={15} h={19} />
            <span className="ml-[9px] text-[13px] leading-5 font-bold">新流程指示</span>
            <button aria-label="close tab" className="ml-4"><svg width="7" height="7" stroke="#5b6b85"><path d="M0 0l7 7M7 0L0 7" /></svg></button>
          </div>
          <svg width="9" height="5" viewBox="0 0 9 5"><path d="M0 0h9L4.500 5z" fill="#1e395b" /></svg>
        </div>
        <Ribbon />
        <MainInfo />
        <div className="flex h-[7px] shrink-0 justify-center border-t border-b-2 border-[#5b6b85] bg-gradient-to-b from-[#c4d0e0] to-[#8d9bb0] pl-[246px]">
          <svg width="64" height="4" viewBox="0 0 64 4"><path d="M0 0h6L3 4zM58 0h6l-3 4z" fill="#1f3b78" /><path d="M14 1.500H50" stroke="#1f3b78" strokeWidth="2" strokeDasharray="2 2" /></svg>
        </div>
        <div className="flex min-h-0 flex-1">
          <FlowPanel />
          <Splitter />
          <ParamPanel />
        </div>
      </main>
    </div>
    <StatusBar />
  </div>
);

export default function App() {
  return (
    <div className="relative flex min-h-screen flex-col overflow-hidden bg-black text-black">
      <div className="flex h-[30px] shrink-0 items-center bg-white font-['Roboto',sans-serif] text-[13px] text-[#999]">
        <XWindowIcon />
        <span className="ml-[5px]">Graphic Editor 9.07b2 (00@HY-HYCAM-PC148 - Windows, pid:6276)</span>
      </div>
      <MenuBar />
      <div className="flex flex-1">
        <LayerSidebar />
        <div className="relative flex flex-1 justify-end overflow-hidden">
          <Board />
          <ToolStrip />
        </div>
      </div>
      <EdsWindow />
      <OptionsPopup />
    </div>
  );
}
